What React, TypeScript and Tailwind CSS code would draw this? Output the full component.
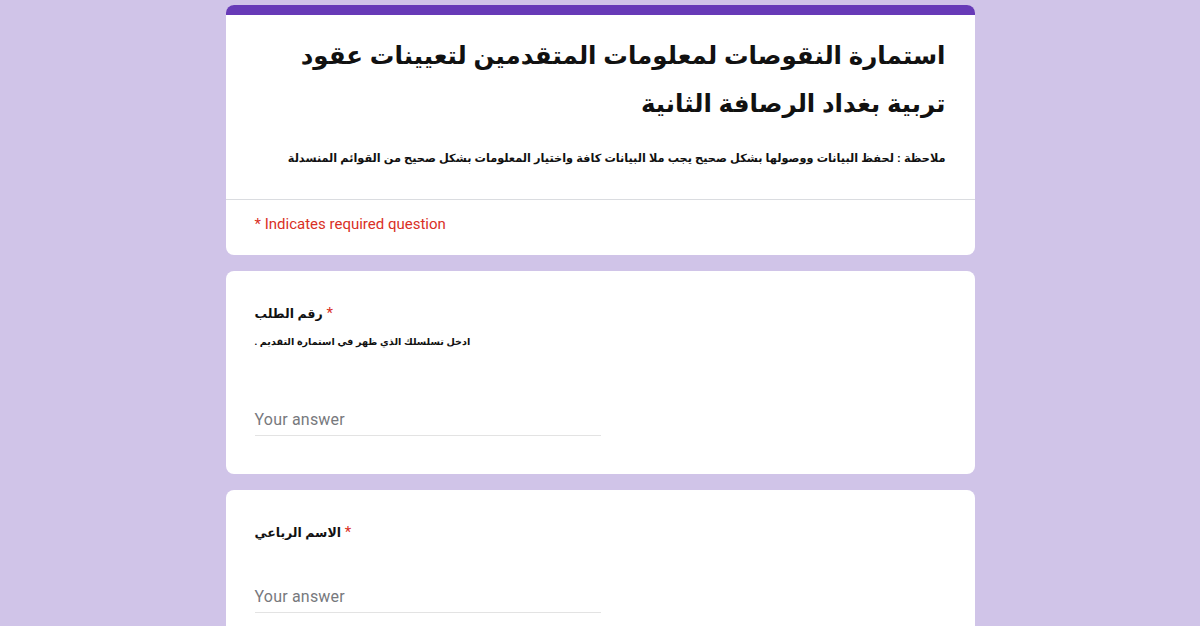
const arabic = { fontFamily: '"Liberation Sans", "DejaVu Sans", sans-serif' };

function AnswerField() {
  return (
    <div className="w-[346px] h-[28px] border-b border-[#e3e3e3] text-[16px] leading-[24px] text-[#77797d] font-['Roboto',sans-serif] tracking-[0.2px]">
      Your answer
    </div>
  );
}

function Question({
  label,
  helper,
  gap,
  bottom,
}: {
  label: string;
  helper?: string;
  gap: string;
  bottom: string;
}) {
  return (
    <div className={`bg-white rounded-lg px-[29px] pt-[30px] ${bottom}`}>
      <div className="text-[12.5px] leading-[24px] font-bold text-[#111111]" style={arabic}>
        {label}
        <span className="text-[#d93025] text-[15px] font-['Roboto',sans-serif] font-normal"> *</span>
      </div>
      {helper && (
        <div
          dir="ltr"
          className="mt-[6px] text-[9.6px] leading-[20px] font-bold text-[#111111] whitespace-nowrap"
          style={arabic}
        >
          {helper}
        </div>
      )}
      <div className={gap}>
        <AnswerField />
      </div>
    </div>
  );
}

export default function App() {
  return (
    <div className="min-h-[626px] w-full bg-[#d0c4e8] overflow-hidden">
      <div className="mx-auto w-[749px] pt-[5px] flex flex-col gap-4">
        <div className="bg-white rounded-lg overflow-hidden">
          <div className="h-[10px] bg-[#673ab7]" />
          <div dir="rtl" className="px-[29px] pt-[17px] pb-[31px] border-b border-[#dadce0]">
            <h1 className="text-[24.5px] leading-[48px] font-bold text-[#111111] whitespace-nowrap" style={arabic}>
              استمارة النقوصات لمعلومات المتقدمين لتعيينات عقود
              <br />
              تربية بغداد الرصافة الثانية
            </h1>
            <p className="mt-5 text-[11.3px] leading-[20px] font-bold text-[#111111] whitespace-nowrap" style={arabic}>
              ملاحظة : لحفظ البيانات ووصولها بشكل صحيح يجب ملا البيانات كافة واختيار المعلومات بشكل صحيح من القوائم المنسدلة
            </p>
          </div>
          <div className="px-[29px] pt-[14px] pb-[21px] text-[15px] leading-[20px] text-[#d93025] font-['Roboto',sans-serif]">
            * Indicates required question
          </div>
        </div>

        <Question
          label="رقم الطلب"
          helper=". ادخل تسلسلك الذي ظهر في استمارة التقديم"
          gap="mt-[56px]"
          bottom="pb-[38px]"
        />
        <Question label="الاسم الرباعي" gap="mt-[40px]" bottom="pb-[38px]" />
      </div>
    </div>
  );
}
